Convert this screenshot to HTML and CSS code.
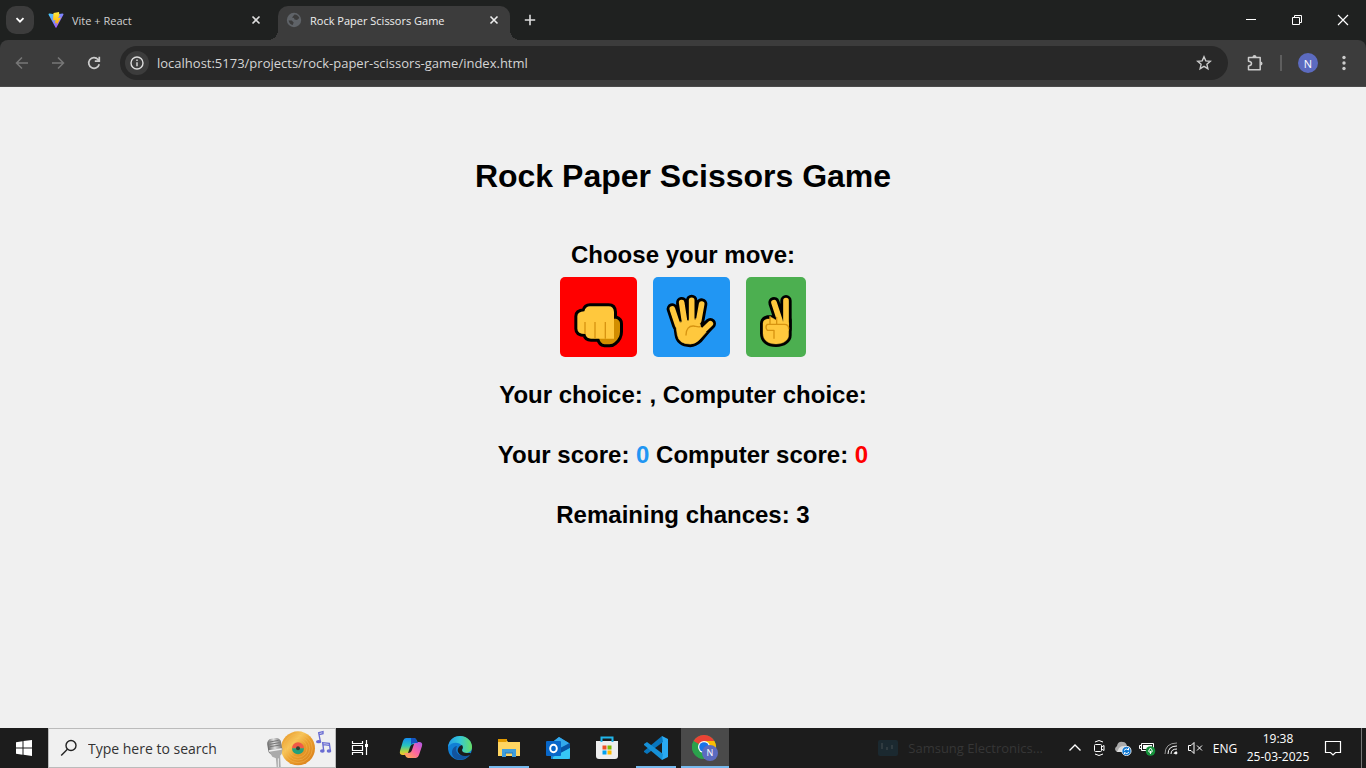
FILE: index.html
```html
<!DOCTYPE html>
<html lang="en">
<head>
<meta charset="utf-8">
<title>Rock Paper Scissors Game</title>
<link rel="stylesheet" href="styles.css">
</head>
<body>
<header class="browser">
  <div class="tabstrip">
    <button class="tab-search" aria-label="Search tabs"><svg width="12" height="12" viewBox="0 0 12 12" fill="none" stroke="#fff" stroke-width="1.8"><path d="M2.5 4.2 6 7.7l3.5-3.5"/></svg></button>
    <div class="tab">
      <svg width="16" height="16" viewBox="0 0 32 32"><defs><linearGradient id="vite" x1="0" y1="0" x2="1" y2="1"><stop offset="0" stop-color="#41d1ff"/><stop offset="1" stop-color="#bd34fe"/></linearGradient><linearGradient id="bolt" x1="0" y1="0" x2="0" y2="1"><stop offset="0" stop-color="#ffea3a"/><stop offset="1" stop-color="#ffa800"/></linearGradient></defs><path d="M31 5 17 31q-1 1-2 0L1 5q0-2 2-2l13 2 13-2q2 0 2 2Z" fill="url(#vite)"/><path d="m22 0-11 2-1 15 5-1-1 7 4-2-1 6 9-16-6 1 3-5Z" fill="url(#bolt)"/></svg>
      <span class="tab-title">Vite + React</span>
      <button class="tab-close" aria-label="Close Vite + React"><svg width="10" height="10" viewBox="0 0 10 10" stroke="#dedede" stroke-width="1.6"><path d="m1.5 1.5 7 7m0-7-7 7"/></svg></button>
    </div>
    <div class="tab tab-active">
      <svg width="16" height="16" viewBox="0 0 16 16"><circle cx="8" cy="8" r="7.2" fill="#5f6368"/><path d="M2.500 8.500h3.200l2 2-1 2.500q-3-.5-4.200-4.500ZM8.500 2.500q3.500 0 4.800 3.500L11 8 8.500 7.500 8 6 6 5.500Z" fill="#3c3c3c"/></svg>
      <span class="tab-title">Rock Paper Scissors Game</span>
      <button class="tab-close" aria-label="Close Rock Paper Scissors Game"><svg width="10" height="10" viewBox="0 0 10 10" stroke="#eee" stroke-width="1.6"><path d="m1.500 1.500 7 7m0-7-7 7"/></svg></button>
    </div>
    <button class="new-tab" aria-label="New tab"><svg width="12" height="12" viewBox="0 0 12 12" stroke="#ddd" stroke-width="1.600"><path d="M6 .8v10.400M.8 6h10.400"/></svg></button>
    <div class="window-controls">
      <button aria-label="Minimize"><svg width="12" height="12" viewBox="0 0 12 12" stroke="#fff"><path d="M1 5.500h10"/></svg></button>
      <button aria-label="Restore"><svg width="12" height="12" viewBox="0 0 12 12" fill="none" stroke="#fff"><path d="M1.500 3.500h7v7h-7zM3.500 3.500v-2h7v7h-2"/></svg></button>
      <button aria-label="Close window"><svg width="12" height="12" viewBox="0 0 12 12" stroke="#fff" stroke-width="1.200"><path d="m1 1 10 10M11 1 1 11"/></svg></button>
    </div>
  </div>
  <div class="toolbar">
    <button class="nav" aria-label="Back"><svg width="16" height="16" viewBox="0 0 16 16" fill="none" stroke="#777" stroke-width="1.500"><path d="M14 8H3m5-5.500L2.500 8 8 13.500"/></svg></button>
    <button class="nav" aria-label="Forward"><svg width="16" height="16" viewBox="0 0 16 16" fill="none" stroke="#777" stroke-width="1.500"><path d="M2 8h11M8 2.500 13.500 8 8 13.500"/></svg></button>
    <button class="nav" aria-label="Reload"><svg width="16" height="16" viewBox="0 0 16 16" fill="none" stroke="#ccc" stroke-width="1.700"><path d="M13.200 9.200A5.300 5.300 0 1 1 12 4.500l1.200 1.200M13.300 1.800v4.400H8.800"/></svg></button>
    <div class="omnibox">
      <button class="site-info" aria-label="Site information"><svg width="14" height="14" viewBox="0 0 14 14" fill="none" stroke="#ddd" stroke-width="1.400"><circle cx="7" cy="7" r="6"/><path d="M7 6.300v4M7 3.500v1.500"/></svg></button>
      <input class="url" type="text" aria-label="Address" value="localhost:5173/projects/rock-paper-scissors-game/index.html">
      <button class="bookmark" aria-label="Bookmark this page"><svg width="16" height="16" viewBox="0 0 16 16" fill="none" stroke="#ccc" stroke-width="1.400"><path d="m8 1.800 1.800 4.100 4.500.4-3.400 3 1 4.400L8 11.400l-3.900 2.300 1-4.400-3.400-3 4.500-.4Z"/></svg></button>
    </div>
    <button class="extensions" aria-label="Extensions"><svg width="18" height="18" viewBox="0 0 18 18"><path d="M2.500 3.500h11.700v12.200H2.500v-3.800q3-.2 3-2.300t-3-2.300Z" fill="none" stroke="#ccc" stroke-width="1.500" stroke-linejoin="round"/><path d="M6.500 3a2 2 0 0 1 4 0ZM14.500 7.600a2 2 0 0 1 0 4Z" fill="#ccc"/></svg></button>
    <span class="divider"></span>
    <button class="profile" aria-label="Profile">N</button>
    <button class="menu" aria-label="Menu"><svg width="4" height="16" viewBox="0 0 4 16" fill="#ccc"><circle cx="2" cy="2.500" r="1.700"/><circle cx="2" cy="8" r="1.700"/><circle cx="2" cy="13.500" r="1.700"/></svg></button>
  </div>
</header>

<main class="game">
  <h1>Rock Paper Scissors Game</h1>
  <h2>Choose your move:</h2>
  <div class="moves">
    <button class="move rock" aria-label="Rock">
      <svg width="77" height="80" viewBox="30 21 231 240">
        <g stroke="#000" stroke-width="18" stroke-linejoin="round"><path d="M190 146h8q12 4 12 15v24q0 18-16 32-6 6-16 6h-14q-14-2-17-20Z"/><path d="M120 109h56q15 0 16 17v62q0 18-18 18h-51q-14 0-17-14-24 0-24-16v-37q0-14 21-15 4-15 17-15Z"/></g>
        <path d="M190 146h8q12 4 12 15v24q0 18-16 32-6 6-16 6h-14q-14-2-17-20Z" fill="#d18d00"/>
        <path d="M120 109h56q15 0 16 17v80h-69q-14 0-17-14-24 0-24-16v-37q0-14 21-15 4-15 17-15Z" fill="#ffc83d"/>
        <path d="M105 156v36M135 156v50M166 156v50" stroke="#d79411" stroke-width="4" fill="none"/>
      </svg>
    </button>
    <button class="move paper" aria-label="Paper">
      <svg width="77" height="80" viewBox="309 21 231 240" stroke-linecap="round" stroke-linejoin="round">
        <g stroke="#000" fill="#000"><path d="m367 117 16 48M395 98l8 52M425 91v60M455 102l-9 50M481 161l-32 31" stroke-width="34" fill="none"/><path d="m377 160 5 34q4 28 39 29 14 0 28-13l30-36-26-9-9-24Z" stroke-width="17"/></g>
        <g stroke="#ffc83d" fill="#ffc83d"><path d="m367 117 16 48M395 98l8 52M425 91v60M455 102l-9 50M481 161l-32 31" stroke-width="17" fill="none"/><path d="m377 160 5 34q4 28 39 28 14 0 27-13l20-22-16-17-6-24Z" stroke-width="2"/></g>
        <path d="M408 195c0-18 9-28 23-27 7 1 12 4 20 2" stroke="#d79411" stroke-width="4" fill="none"/>
      </svg>
    </button>
    <button class="move scissors" aria-label="Scissors">
      <svg width="60" height="80" viewBox="588 21 180 240" stroke-linecap="round" stroke-linejoin="round">
        <g stroke="#000" fill="#000"><path d="M708 92v85M672 98l18 55" stroke-width="34" fill="none"/><path d="m652 145 15 0 49 6v45c0 14-15 26-38 26s-39-10-39-32v-29q0-12 13-16Z" stroke-width="18"/></g>
        <g fill="#ffc83d" stroke="#ffc83d"><path d="M708 92v85M672 98l18 55" stroke-width="17" fill="none"/><path d="m661 140 17 10 38 8v38c0 14-15 26-38 26s-39-10-39-32v-30q0-10 12-13l9 0Z" stroke-width="1"/></g>
        <path d="M660 140v22M680 142v20M652 163h51q13 0 13 13M652 163q-8 8 0 18h20v24" fill="none" stroke="#d79411" stroke-width="4"/>
      </svg>
    </button>
  </div>
  <p>Your choice: , Computer choice:</p>
  <p>Your score: <span class="you">0</span> Computer score: <span class="computer">0</span></p>
  <p>Remaining chances: 3</p>
</main>

<footer class="taskbar">
  <button class="start" aria-label="Start"><svg width="16" height="16" viewBox="0 0 16 16" fill="#fff"><path d="M0 2.200 6.500 1.300v6.200H0ZM7.500 1.100 16 0v7.500H7.500ZM0 8.500h6.500v6.200L0 13.800ZM7.500 8.500H16V16l-8.500-1.200Z"/></svg></button>
  <label class="search">
    <svg width="18" height="18" viewBox="0 0 18 18" fill="none" stroke="#222" stroke-width="1.400"><circle cx="11" cy="6.500" r="5"/><path d="m7.400 10.200-6.200 6.200"/></svg>
    <input type="search" placeholder="Type here to search" aria-label="Type here to search">
    <svg class="music" width="68" height="38" viewBox="0 0 204 114">
      <defs><linearGradient id="mic" x1="0" x2="1"><stop offset="0" stop-color="#666"/><stop offset=".5" stop-color="#ddd"/><stop offset="1" stop-color="#777"/></linearGradient><linearGradient id="disc" x1="0" y1="0" x2="1" y2="1"><stop offset="0" stop-color="#e38a1b"/><stop offset=".35" stop-color="#f7c65a"/><stop offset=".55" stop-color="#e99c2b"/><stop offset="1" stop-color="#d77b17"/></linearGradient></defs>
      <circle cx="102" cy="58" r="51" fill="url(#disc)"/><g fill="none" stroke="#f5b955" stroke-width="1.500"><circle cx="102" cy="58" r="43"/><circle cx="102" cy="58" r="35"/><circle cx="102" cy="58" r="27"/></g><path d="M84 58a18 18 0 0 1 36 0Z" fill="#f15a46"/><path d="M84 58a18 18 0 0 0 36 0Z" fill="#24a17b"/><circle cx="102" cy="58" r="6" fill="#343"/>
      <path d="m34 68 14 1 2 45H38Z" fill="#aaa"/><rect x="11" y="28" width="42" height="48" rx="14" transform="rotate(-9 32 52)" fill="url(#mic)"/><path d="m17 39 27-5M17 46l30-5M18 53l31-5" stroke="#777" stroke-width="3"/><path d="m13 64 43-7-3 18-13 14-15-6Z" fill="#aaa"/><path d="m15 66 38-6" stroke="#eee" stroke-width="4"/><path d="M43 88v26" stroke="#eee" stroke-width="3"/>
      <g fill="#686bd2" stroke="#686bd2" stroke-width="4"><ellipse cx="164" cy="38" rx="6" ry="3"/><path d="m169 37-5-26 13-3v6l-12 3" fill="none"/><ellipse cx="175" cy="66" rx="5" ry="3"/><ellipse cx="195" cy="66" rx="5" ry="3"/><path d="m179 65-3-24 20 2 3 22m-22-18 20 2" fill="none"/></g>
    </svg>
  </label>
  <nav class="apps" aria-label="Applications">
    <button class="task-view" aria-label="Task View"><svg width="18" height="18" viewBox="0 0 18 18" fill="none" stroke="#fff" stroke-width="1.200"><path d="M1.500 2V4.500h10V2M1.500 16v-2.500h10V16M1.500 6.500h10v5h-10zM15.500 1v15"/><path d="M14 5h3v3h-3z" fill="#fff" stroke="none"/></svg></button>
    <button aria-label="Copilot"><svg width="24" height="24" viewBox="0 0 24 24"><defs><linearGradient id="cpa" x1="0" y1="0" x2="0" y2="1"><stop offset="0" stop-color="#168cf1"/><stop offset=".45" stop-color="#28c4bd"/><stop offset=".75" stop-color="#a4d34a"/><stop offset="1" stop-color="#ffc727"/></linearGradient><linearGradient id="cpb" x1="1" y1="0" x2="0" y2="1"><stop offset="0" stop-color="#ae58e9"/><stop offset=".5" stop-color="#ff65a0"/><stop offset="1" stop-color="#ffb642"/></linearGradient></defs><path d="M7 2h8q2 0 3 3l1 3h-4q-3 0-4 3l-2 6q-1 2-4 2H4q-4 0-3-4L4 5q1-3 3-3Z" fill="url(#cpa)"/><path d="M17 22H9q-2 0-3-3l-1-2h4q3 0 4-3l2-6q1-2 4-2h1q4 0 3 4l-3 9q-1 3-3 3Z" fill="url(#cpb)"/><path d="M12 2h3q2 0 3 3l1 2h-4q-2 0-3 2Z" fill="#1453c2"/></svg></button>
    <button aria-label="Microsoft Edge"><svg width="24" height="24" viewBox="0 0 24 24"><defs><linearGradient id="edge"><stop offset="0" stop-color="#249ce9"/><stop offset=".5" stop-color="#35c8d5"/><stop offset="1" stop-color="#68df64"/></linearGradient></defs><circle cx="12" cy="12" r="12" fill="#117fd5"/><path d="M0 11C1 3 7 0 12 0c8 0 12 6 12 11 0 4-3 6-7 6-3 0-4-1-3-3 1-1 1-2 0-4-3-5-11-4-14 1Z" fill="url(#edge)"/><path d="M9 10c-3 6 2 12 13 8-3 5-9 7-14 5C2 20 3 11 9 10Z" fill="#12549e"/><path d="M14 9c2 3 0 4 0 5 0 2 2 3 5 3h4l-1 2c-5 2-10 1-12-3-1-3 1-6 4-7Z" fill="#1b1b1b"/></svg></button>
    <button class="running" aria-label="File Explorer"><svg width="24" height="24" viewBox="0 0 24 24"><path d="M1 3h8l2 3h12v14H1Z" fill="#ffd35f"/><path d="M1 3h9v2L9 6H1Z" fill="#e29a00"/><path d="M1 7h22v13H1Z" fill="#ffd561"/><path d="M5 13h14v8h-4v-4H9v4H5Z" fill="#409edb"/><path d="M8 17h8" stroke="#2577b9"/></svg></button>
    <button aria-label="Outlook"><svg width="24" height="24" viewBox="0 0 24 24"><path d="m4 8 9-7 11 7v15H5V9Z" fill="#1686da"/><path d="m4 8 9-7 10 6-10 7Z" fill="#33a9ed"/><path d="m14 12 10-5v5L14 18Z" fill="#0754a5"/><path d="m24 12-17 9v2h15q2 0 2-2Z" fill="#37c6f5"/><rect y="5" width="15" height="15" rx="1" fill="#0867c9"/><ellipse cx="7.500" cy="12.500" rx="3.300" ry="3.700" fill="none" stroke="#fff" stroke-width="2"/></svg></button>
    <button aria-label="Microsoft Store"><svg width="24" height="24" viewBox="0 0 24 24"><path d="M1 5h22v15q0 3-3 3H4q-3 0-3-3Z" fill="#eee"/><path d="M6.500 6V1.500h11V6" fill="none" stroke="#20b5e9" stroke-width="2"/><path d="M7.500 9.500h4v4h-4z" fill="#f05022"/><path d="M12.500 9.500h4v4h-4z" fill="#7fbb00"/><path d="M7.500 14.500h4v4h-4z" fill="#00a1f1"/><path d="M12.500 14.500h4v4h-4z" fill="#ffb900"/></svg></button>
    <button class="running" aria-label="Visual Studio Code"><svg width="24" height="24" viewBox="0 0 24 24"><path d="m18 0 6 3v18l-6 3Z" fill="#2aaaf2"/><path d="m18 0 1 6L3 18l-3-2v-1Z" fill="#0876bd"/><path d="m18 24 1-6L3 6 0 8v1Z" fill="#1690d6"/></svg></button>
    <button class="running selected" aria-label="Google Chrome"><svg width="26" height="26" viewBox="0 0 26 26"><circle cx="12" cy="12" r="12" fill="#2ba24c"/><path d="M1.600 6A12 12 0 0 1 22.400 6H12v6Z" fill="#ea4335"/><path d="M12 6h10.400A12 12 0 0 1 12 24l5-9Z" fill="#fbbc04"/><path d="M1.600 6 7 15l5 3-2 5.800A12 12 0 0 1 1.600 6Z" fill="#2ba24c"/><circle cx="12" cy="12" r="6" fill="#fff"/><circle cx="12" cy="12" r="4.800" fill="#1a73e8"/><circle cx="18" cy="18" r="8" fill="#5c6bc0"/><text class="badge-letter" x="18" y="21" text-anchor="middle">N</text></svg></button>
  </nav>
  <div class="device">
    <svg width="22" height="16" viewBox="0 0 22 16"><rect width="20" height="16" rx="2" fill="#1b2930"/><path d="M4 3v6M9 7v3M14 5v4" stroke="#303b40" stroke-width="2"/></svg>
    <span>Samsung Electronics...</span>
  </div>
  <div class="tray">
    <button aria-label="Show hidden icons"><svg width="14" height="16" viewBox="0 0 14 16" fill="none" stroke="#fff" stroke-width="1.400"><path d="m1.500 10.500 5.500-5.500 5.500 5.500"/></svg></button>
    <button aria-label="Meet now"><svg width="12" height="16" viewBox="0 0 12 16" fill="none" stroke="#fff"><rect x="1.500" y="4.500" width="7" height="7" rx="1"/><path d="m8.500 7 2.500-1.500v5L8.500 9M2 2q4-3 8 0M2 14q4 3 8 0"/></svg></button>
    <button aria-label="OneDrive"><svg width="18" height="16" viewBox="0 0 18 16"><path d="M3 12q-4-3 0-6 1-5 6-4 3 0 4 4 4 0 4 4v2Z" fill="#aaa"/><path d="M5 8q4-4 9 0v4H3Z" fill="#ddd"/><circle cx="12.500" cy="11" r="4.600" fill="#0c76d1" stroke="#fff" stroke-width=".8"/><path d="M10 10.500q2-3 4.500-.5V8M15 12q-2 3-4.500.5V14" fill="none" stroke="#fff"/></svg></button>
    <button aria-label="Battery"><svg width="18" height="16" viewBox="0 0 18 16"><path d="M3.500 3.500h12v7h-12zM3.500 5.500h-2v3h2" fill="#1c1c1c" stroke="#fff"/><path d="M5 5h9v4H5Z" fill="#fff"/><circle cx="12.500" cy="11" r="4.800" fill="#14913a"/><path d="M12.500 14v-3M12.500 8q3.500 4 0 4.500-3.500-.5 0-4.500Z" stroke="#fff" fill="none"/></svg></button>
    <button aria-label="Wi-Fi"><svg width="14" height="16" viewBox="0 0 14 16" fill="none" stroke="#fff"><path d="M1 14Q1 3 13 3" stroke="#999"/><path d="M4 14q0-8 9-8M7 14q0-5 6-5M10 14q0-2 3-2"/><circle cx="12" cy="13" r="1" fill="#fff"/></svg></button>
    <button aria-label="Volume muted"><svg width="16" height="16" viewBox="0 0 16 16" fill="none" stroke="#fff"><path d="M1.500 5.500H4l3-3v11l-3-3H1.500Zm8.500 0 5 5m0-5-5 5"/></svg></button>
    <button class="language">ENG</button>
    <button class="clock"><span>19:38</span><span>25-03-2025</span></button>
    <button class="notifications" aria-label="Notifications"><svg width="18" height="18" viewBox="0 0 18 18" fill="none" stroke="#fff" stroke-width="1.200"><path d="M1.500 2.500h15v11h-5L9 16l-2.500-2.500h-5Z"/></svg></button>
  </div>
</footer>
</body>
</html>
```
FILE: styles.css
```css
* { box-sizing: border-box; }
body {
  margin: 0;
  min-height: 100vh;
  display: flex;
  flex-direction: column;
  background: #f0f0f0;
  font-family: "Open Sans", "Noto Sans", sans-serif;
}
svg { display: block; flex: none; }
button {
  display: flex;
  align-items: center;
  justify-content: center;
  flex: none;
  padding: 0;
  border: 0;
  background: transparent;
  color: inherit;
  font: inherit;
}
input {
  min-width: 0;
  padding: 0;
  border: 0;
  outline: 0;
  background: transparent;
  font: inherit;
}

.browser { background: #1f2120; }
.tabstrip { display: flex; height: 40px; padding-left: 6px; }
.tab-search {
  width: 28px;
  height: 28px;
  margin: 6px 6px 0 0;
  border-radius: 10px;
  background: #3c3c3c;
}
.tab {
  display: flex;
  align-items: center;
  gap: 8px;
  width: 232px;
  height: 34px;
  margin: 6px 0 0;
  padding: 0 8px;
  color: #d0d0d0;
  font-size: 11px;
}
.tab:not(.tab-active) { margin-right: 6px; height: 28px; }
.tab-title { flex: 1; white-space: nowrap; }
.tab-close { width: 16px; height: 16px; }
.tab-active {
  position: relative;
  padding-bottom: 6px;
  border-radius: 10px 10px 0 0;
  background: #3c3c3c;
  color: #eee;
}
.tab-active::before,
.tab-active::after {
  content: "";
  position: absolute;
  bottom: 0;
  width: 10px;
  height: 10px;
}
.tab-active::before { left: -10px; background: radial-gradient(circle at 0 0, transparent 10px, #3c3c3c 10px); }
.tab-active::after { right: -10px; background: radial-gradient(circle at 100% 0, transparent 10px, #3c3c3c 10px); }
.new-tab { width: 28px; height: 28px; margin: 6px 0 0 6px; }
.window-controls { display: flex; margin-left: auto; }
.window-controls button { width: 46px; height: 40px; }

.toolbar {
  display: flex;
  align-items: center;
  height: 47px;
  padding: 0 8px 0 4px;
  border-bottom: 1px solid #4a4a4a;
  border-radius: 8px 8px 0 0;
  background: #3c3c3c;
}
.nav { width: 36px; height: 36px; }
.omnibox {
  display: flex;
  align-items: center;
  flex: 1;
  height: 34px;
  margin: 0 12px 0 8px;
  padding: 0 16px 0 5px;
  border-radius: 17px;
  background: #282828;
}
.site-info {
  width: 24px;
  height: 24px;
  margin-right: 8px;
  border-radius: 50%;
  background: #3c3c3c;
}
.url { flex: 1; height: 24px; color: #d5d5d5; font-size: 13px; }
.extensions { width: 30px; height: 28px; }
.divider { width: 2px; height: 16px; margin: 0 16px 0 10px; background: #5e5e5e; }
.profile {
  width: 20px;
  height: 20px;
  border-radius: 50%;
  background: #5c6bc0;
  color: #fff;
  font-size: 11px;
}
.menu { width: 28px; height: 28px; margin-left: 12px; }

.game {
  flex: 1;
  padding: 71px 16px 32px;
  color: #000;
  font-family: "Liberation Sans", Arial, sans-serif;
  font-size: 24px;
  font-weight: 700;
  line-height: 28px;
  text-align: center;
}
.game h1 { margin: 0 0 46px; font-size: 32px; line-height: 37px; }
.game h2 { margin: 0 0 8px; font-size: 24px; }
.game p { margin: 0 0 32px; }
.moves { display: flex; justify-content: center; gap: 16px; margin-bottom: 24px; }
.move { border-radius: 5px; overflow: hidden; }
.rock { background: #f00; }
.paper { background: #2196f3; }
.scissors { background: #4caf50; }
.you { color: #2196f3; }
.computer { color: #f00; }

.taskbar { display: flex; height: 40px; background: #1c1c1c; color: #fff; }
.start { width: 48px; }
.search {
  display: flex;
  align-items: center;
  width: 288px;
  padding: 0 3px 0 11px;
  border: 1px solid #bbb;
  background: #f0f0f0;
}
.search input { flex: 1; margin-left: 10px; font-size: 14px; }
.search input::placeholder { color: #333; opacity: 1; }
.apps { display: flex; gap: 1px; }
.apps button { width: 48px; }
.apps .task-view { margin-right: 2px; }
.apps .running {
  background: linear-gradient(#76b9ed, #76b9ed) bottom / 40px 2px no-repeat;
}
.apps .selected { background-color: #4a4a4a; background-size: 48px 2px; }
.badge-letter { fill: #fff; font-size: 9px; }
.device {
  display: flex;
  align-items: center;
  gap: 8px;
  margin-left: auto;
  color: #363636;
  font-size: 13px;
  white-space: nowrap;
}
.tray { display: flex; align-items: center; margin-left: 20px; padding-right: 4px; font-size: 12px; }
.tray button { width: 24px; height: 40px; }
.tray .language { width: 36px; }
.tray .clock { width: 70px; flex-direction: column; line-height: 18px; }
.tray .notifications { width: 40px; }
.tray::after { content: ""; width: 1px; height: 40px; margin-left: 8px; background: #777; }
```
